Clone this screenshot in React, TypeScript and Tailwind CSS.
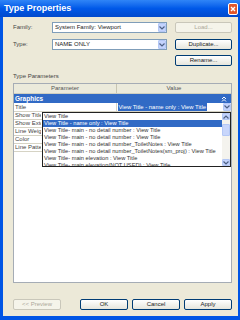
const listItems = [
  'View Title',
  'View Title - name only : View Title',
  'View Title- main - no detail number : View Title',
  'View Title- main - no detail number : View Title',
  'View Title- main - no detail number_ToiletNotes : View Title',
  'View Title- main - no detail number_ToiletNotes(sm_proj) : View Title',
  'View Title- main elevation : View Title',
  'View Title- main elevation(NOT USED) : View Title',
];

const paramRows = ['Show Title', 'Show Extension Line', 'Line Weight', 'Color', 'Line Pattern'];

function Chevron({ up = false }: { up?: boolean }) {
  return (
    <svg width="6" height="4" viewBox="0 0 6 4">
      <path d={up ? 'M0.5 3.5 L3 1 L5.5 3.5' : 'M0.5 0.5 L3 3 L5.5 0.5'} fill="none" stroke="#4d6185" strokeWidth="1.2" />
    </svg>
  );
}

function Combo({ value }: { value: string }) {
  return (
    <div className="w-[115px] h-[11px] border border-[#7f9db9] bg-white flex items-center">
      <span className="flex-1 pl-[2px] text-[6px] text-[#222] truncate">{value}</span>
      <div className="w-[8px] h-[9px] bg-[#c3d3fd] border border-[#b4c8f6] rounded-[1px] flex items-center justify-center">
        <Chevron />
      </div>
    </div>
  );
}

function XpButton({ label, disabled = false, wide = false }: { label: string; disabled?: boolean; wide?: boolean }) {
  return (
    <div
      className={
        (wide ? 'w-[57px] ' : 'w-[48px] ') +
        'h-[11px] rounded-[2px] border flex items-center justify-center text-[6px] ' +
        (disabled
          ? 'border-[#c9c7ba] bg-[#f5f4ea] text-[#aca899]'
          : 'border-[#003c74] bg-gradient-to-b from-white to-[#e6e5dc] text-[#222]')
      }
    >
      {label}
    </div>
  );
}

export default function App() {
  return (
    <div className="w-[240px] h-[320px] flex flex-col bg-[#0055e5] font-['Liberation_Sans',Arial,sans-serif] overflow-hidden">
      {/* title bar */}
      <div className="h-[17px] flex items-center justify-between pl-[4px] pr-[2px] bg-gradient-to-b from-[#2f85f7] via-[#0058e8] to-[#0049cc]">
        <span className="text-white text-[9px] font-bold leading-none">Type Properties</span>
        <div className="w-[10px] h-[12px] rounded-[2px] border border-white bg-[#e2572c] flex items-center justify-center">
          <svg width="6" height="6" viewBox="0 0 6 6">
            <path d="M1 1 L5 5 M5 1 L1 5" stroke="white" strokeWidth="1.4" />
          </svg>
        </div>
      </div>

      {/* body */}
      <div className="flex-1 ml-[3px] mr-[2px] mb-[4px] bg-[#ece9d8] flex flex-col pl-[10px] pr-[6px] pt-[5px] pb-[6px]">
        <div className="flex items-center">
          <span className="w-[39px] text-[6px] text-[#444]">Family:</span>
          <Combo value="System Family: Viewport" />
          <div className="ml-[8px]">
            <XpButton label="Load..." disabled wide />
          </div>
        </div>
        <div className="flex items-center mt-[6px]">
          <span className="w-[39px] text-[6px] text-[#444]">Type:</span>
          <Combo value="NAME ONLY" />
          <div className="ml-[8px]">
            <XpButton label="Duplicate..." wide />
          </div>
        </div>
        <div className="flex justify-end mt-[5px]">
          <XpButton label="Rename..." wide />
        </div>

        <div className="mt-[6px] h-[8px] flex items-center text-[6px] text-[#444]">Type Parameters</div>

        {/* table */}
        <div className="mt-[3px] h-[200px] border border-[#a5acb5] bg-white relative flex flex-col">
          <div className="h-[10px] flex bg-[#ebeadb] border-b border-[#d0cfc0] text-[6px] text-[#555]">
            <div className="w-[103px] flex items-center justify-center border-r border-[#c7c5b2]">Parameter</div>
            <div className="flex-1 flex items-center justify-center">Value</div>
          </div>
          <div className="h-[9px] flex items-center justify-between bg-[#316ac5] px-[1px]">
            <span className="text-white text-[6.5px] font-bold">Graphics</span>
            <svg width="6" height="6" viewBox="0 0 6 6" className="mr-[3px]">
              <path d="M1 3 L3 1 L5 3 M1 5.5 L3 3.5 L5 5.5" fill="none" stroke="white" strokeWidth="1" />
            </svg>
          </div>
          <div className="h-[9px] flex border-b border-[#d6d3c4]">
            <div className="w-[103px] pl-[1px] flex items-center text-[6px] text-[#444] border-r border-[#d6d3c4]">Title</div>
            <div className="flex-1 flex items-center">
              <span className="ml-[1px] bg-[#316ac5] text-white text-[5.9px] leading-[8px] px-[0.5px] whitespace-nowrap">View Title - name only : View Title</span>
              <div className="flex-1" />
              <div className="w-[8px] h-[8px] bg-[#c3d3fd] border border-[#b4c8f6] rounded-[1px] flex items-center justify-center">
                <Chevron />
              </div>
            </div>
          </div>
          {paramRows.map((p) => (
            <div key={p} className="h-[8px] flex border-b border-[#d6d3c4]">
              <div className="w-[103px] flex items-center border-r border-[#d6d3c4]">
                <div className="w-[27px] pl-[1px] text-[6px] text-[#444] whitespace-nowrap overflow-hidden">{p}</div>
              </div>
              <div className="flex-1" />
            </div>
          ))}

          {/* open dropdown list */}
          <div className="absolute top-[28px] left-[28px] w-[189px] h-[55px] border border-[#222] bg-white flex">
            <div className="flex-1 overflow-hidden flex flex-col">
              {listItems.map((t, i) => (
                <div
                  key={i}
                  className={
                    'h-[7px] shrink-0 flex items-center pl-[1px] text-[5.7px] leading-[7px] whitespace-nowrap overflow-hidden ' +
                    (i === 1 ? 'bg-[#316ac5] text-white' : 'text-[#333]')
                  }
                >
                  {t}
                </div>
              ))}
            </div>
            <div className="w-[8px] bg-[#f4f3ee] flex flex-col justify-between">
              <div className="flex flex-col">
                <div className="h-[7px] bg-[#c3d3fd] border border-[#b4c8f6] rounded-[1px] flex items-center justify-center">
                  <Chevron up />
                </div>
                <div className="h-[12px] mt-[4px] bg-[#c8d6fb] border border-[#b4c8f6] rounded-[1px]" />
              </div>
              <div className="h-[7px] bg-[#c3d3fd] border border-[#b4c8f6] rounded-[1px] flex items-center justify-center">
                <Chevron />
              </div>
            </div>
          </div>
        </div>

        <div className="mt-[16px] flex items-center">
          <XpButton label="<< Preview" disabled />
          <div className="flex-1" />
          <div className="flex gap-[4px]">
            <XpButton label="OK" />
            <XpButton label="Cancel" />
            <XpButton label="Apply" />
          </div>
        </div>
      </div>
    </div>
  );
}
